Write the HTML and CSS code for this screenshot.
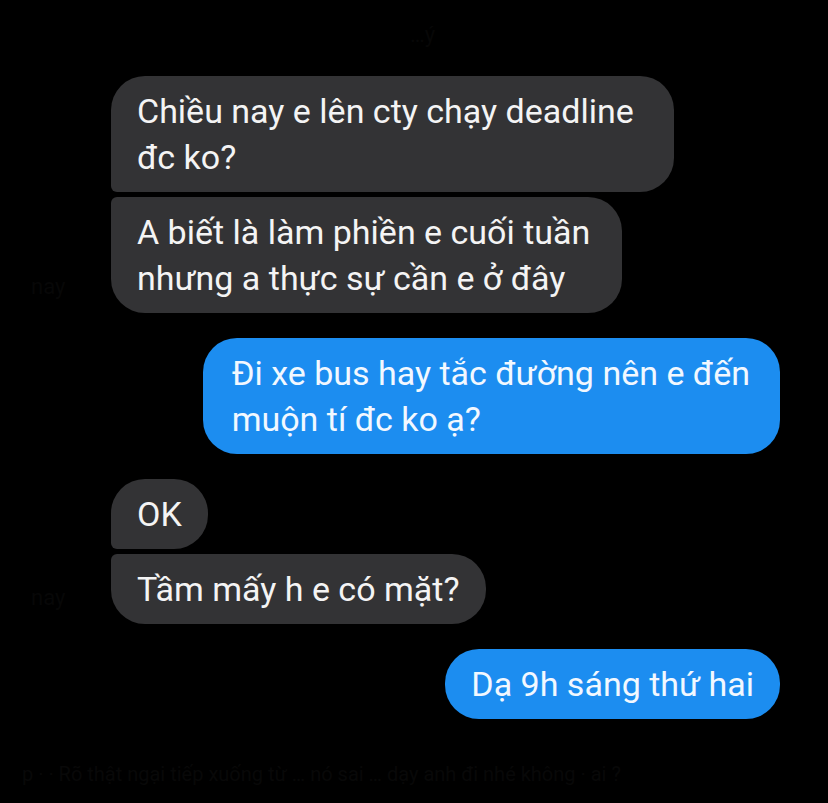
FILE: index.html
```html
<!DOCTYPE html>
<html lang="vi">
<head>
<meta charset="utf-8">
<link rel="stylesheet" href="styles.css">
</head>
<body>
<div class="screen">
  <div class="top-ghost">…ý</div>
  <div class="thread">
    <div class="row in">
      <div class="bubble gray first wide1">Chiều nay e lên cty chạy deadline<br>đc ko?</div>
    </div>
    <div class="row in">
      <div class="ghost-avatar">nay</div>
      <div class="bubble gray last wide2">A biết là làm phiền e cuối tuần<br>nhưng a thực sự cần e ở đây</div>
    </div>
    <div class="row out gap">
      <div class="bubble blue multi">Đi xe bus hay tắc đường nên e đến<br>muộn tí đc ko ạ?</div>
    </div>
    <div class="row in gap">
      <div class="bubble gray first">OK</div>
    </div>
    <div class="row in">
      <div class="ghost-avatar">nay</div>
      <div class="bubble gray last">Tầm mấy h e có mặt?</div>
    </div>
    <div class="row out gap">
      <div class="bubble blue">Dạ 9h sáng thứ hai</div>
    </div>
  </div>
  <div class="bottom-ghost">p · · Rõ thật ngại tiếp xuống từ … nó sai … dạy anh đi nhé không · ai ?</div>
</div>
</body>
</html>
```

FILE: styles.css
```css
* { box-sizing: border-box; }
html, body {
  margin: 0;
  background: #000;
}
body {
  width: 828px;
  height: 803px;
  overflow: hidden;
  font-family: Roboto, "Liberation Sans", Arial, sans-serif;
}
.screen {
  position: relative;
  width: 828px;
  height: 803px;
}
.top-ghost {
  position: absolute;
  left: 410px;
  top: 22px;
  color: #070707;
  font-size: 22px;
}
.thread {
  display: flex;
  flex-direction: column;
  gap: 5px;
  padding: 76px 48px 0 111px;
}
.row {
  display: flex;
  position: relative;
}
.row.gap { margin-top: 20px; }
.row.out { justify-content: flex-end; }
.bubble {
  font-size: 34px;
  line-height: 46px;
  color: #f4f4f4;
  padding: 12px 26px 12px 26px;
  border-radius: 34px;
  white-space: nowrap;
}
.wide1 { padding-right: 40px; }
.wide2 { padding-right: 32px; }
.gray { background: #333335; }
.gray.first { border-bottom-left-radius: 6px; }
.gray.last { border-top-left-radius: 6px; }
.blue {
  background: #1c8df0;
  color: #f2f8ff;
}
.blue.multi { padding: 12px 30px 12px 29px; }
.ghost-avatar {
  position: absolute;
  left: -80px;
  bottom: 14px;
  color: #070707;
  font-size: 22px;
}
.bottom-ghost {
  position: absolute;
  left: 22px;
  top: 762px;
  color: #080808;
  font-size: 20px;
  white-space: nowrap;
}
```
